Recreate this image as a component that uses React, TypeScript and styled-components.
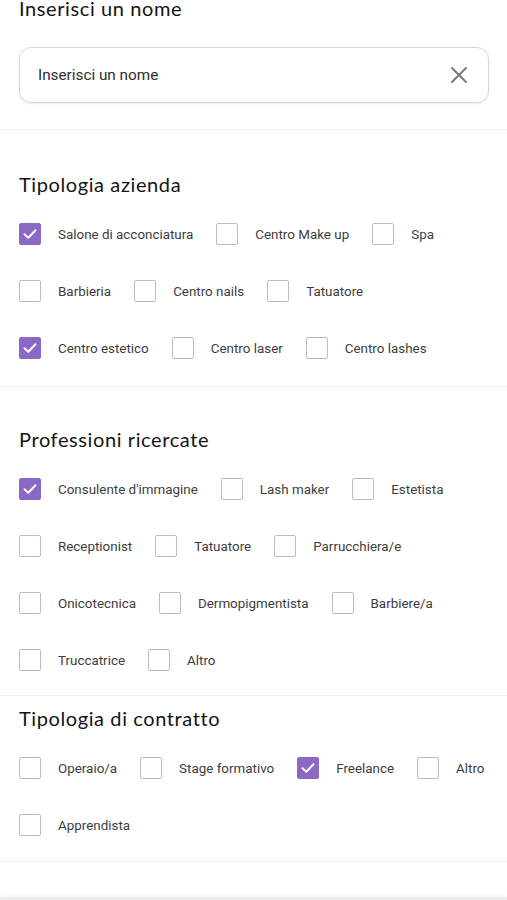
import React from 'react';
import styled, { createGlobalStyle } from 'styled-components';

const GlobalStyle = createGlobalStyle`
  html, body {
    margin: 0;
    padding: 0;
    background: #ffffff;
  }
  body {
    font-family: Roboto, "Liberation Sans", sans-serif;
    overflow: hidden;
  }
`;

type Option = { label: string; checked?: boolean };

const aziendaRows: Option[][] = [
  [{ label: 'Salone di acconciatura', checked: true }, { label: 'Centro Make up' }, { label: 'Spa' }],
  [{ label: 'Barbieria' }, { label: 'Centro nails' }, { label: 'Tatuatore' }],
  [{ label: 'Centro estetico', checked: true }, { label: 'Centro laser' }, { label: 'Centro lashes' }],
];

const professioniRows: Option[][] = [
  [{ label: "Consulente d'immagine", checked: true }, { label: 'Lash maker' }, { label: 'Estetista' }],
  [{ label: 'Receptionist' }, { label: 'Tatuatore' }, { label: 'Parrucchiera/e' }],
  [{ label: 'Onicotecnica' }, { label: 'Dermopigmentista' }, { label: 'Barbiere/a' }],
  [{ label: 'Truccatrice' }, { label: 'Altro' }],
];

const contrattoRows: Option[][] = [
  [{ label: 'Operaio/a' }, { label: 'Stage formativo' }, { label: 'Freelance', checked: true }, { label: 'Altro' }],
  [{ label: 'Apprendista' }],
];

const Check = ({ checked }: { checked?: boolean }) => (
  <Box $checked={checked}>
    {checked && (
      <svg width="16" height="16" viewBox="0 0 16 16" fill="none">
        <path d="M2.5 8.2 L6.3 11.8 L13.5 4.3" stroke="#ffffff" strokeWidth="2" strokeLinecap="round" strokeLinejoin="round" />
      </svg>
    )}
  </Box>
);

const OptionGrid = ({ rows }: { rows: Option[][] }) => (
  <Grid>
    {rows.map((row, i) => (
      <Row key={i}>
        {row.map((o) => (
          <Item key={o.label}>
            <Check checked={o.checked} />
            <Label>{o.label}</Label>
          </Item>
        ))}
      </Row>
    ))}
  </Grid>
);

export default function App() {
  return (
    <>
      <GlobalStyle />
      <Page>
        <Section $top={0} $bottom={26}>
          <Title $offset={-4}>Inserisci un nome</Title>
          <InputBox>
            <InputText>Inserisci un nome</InputText>
            <svg width="18" height="18" viewBox="0 0 18 18" fill="none">
              <path d="M2 2 L16 16 M16 2 L2 16" stroke="#7a7a7a" strokeWidth="2" strokeLinecap="round" />
            </svg>
          </InputBox>
        </Section>
        <Section $top={42} $bottom={27}>
          <Title>Tipologia azienda</Title>
          <OptionGrid rows={aziendaRows} />
        </Section>
        <Section $top={40} $bottom={24}>
          <Title>Professioni ricercate</Title>
          <OptionGrid rows={professioniRows} />
        </Section>
        <Section $top={10} $bottom={25}>
          <Title>Tipologia di contratto</Title>
          <OptionGrid rows={contrattoRows} />
        </Section>
        <Spacer />
        <BottomBar />
      </Page>
    </>
  );
}

const Page = styled.div`
  width: 507px;
  height: 900px;
  display: flex;
  flex-direction: column;
  background: #ffffff;
`;

const Section = styled.section<{ $top: number; $bottom: number }>`
  display: flex;
  flex-direction: column;
  gap: 27px;
  padding: ${(p) => p.$top}px 18px ${(p) => p.$bottom}px 19px;
  border-bottom: 1.5px solid #f1f1f1;
`;

const Title = styled.h2<{ $offset?: number }>`
  margin: ${(p) => p.$offset ?? 0}px 0 0;
  font-family: Lato, "Open Sans", sans-serif;
  font-weight: 400;
  font-size: 20px;
  line-height: 24px;
  color: #141414;
  letter-spacing: 0.6px;
`;

const InputBox = styled.div`
  height: 54px;
  border: 1px solid #d7d7d7;
  border-radius: 12px;
  box-shadow: 0 1px 2px rgba(0, 0, 0, 0.08);
  display: flex;
  align-items: center;
  justify-content: space-between;
  padding: 0 20px 0 18px;
`;

const InputText = styled.span`
  font-size: 15.3px;
  color: #2e2e2e;
`;

const Grid = styled.div`
  display: flex;
  flex-direction: column;
  gap: 35px;
`;

const Row = styled.div`
  display: flex;
  align-items: center;
  gap: 23px;
`;

const Item = styled.div`
  display: flex;
  align-items: center;
  gap: 17px;
`;

const Box = styled.div<{ $checked?: boolean }>`
  width: 22px;
  height: 22px;
  box-sizing: border-box;
  border-radius: 2px;
  border: 1.5px solid ${(p) => (p.$checked ? '#8b68c6' : '#bdbdbd')};
  background: ${(p) => (p.$checked ? '#8b68c6' : '#ffffff')};
  display: flex;
  align-items: center;
  justify-content: center;
  flex-shrink: 0;
`;

const Label = styled.span`
  font-size: 13.4px;
  color: #3d3d3d;
  white-space: nowrap;
`;

const Spacer = styled.div`
  flex: 1;
`;

const BottomBar = styled.div`
  height: 3px;
  background: #ececec;
  box-shadow: 0 -2px 4px rgba(0, 0, 0, 0.04);
`;
